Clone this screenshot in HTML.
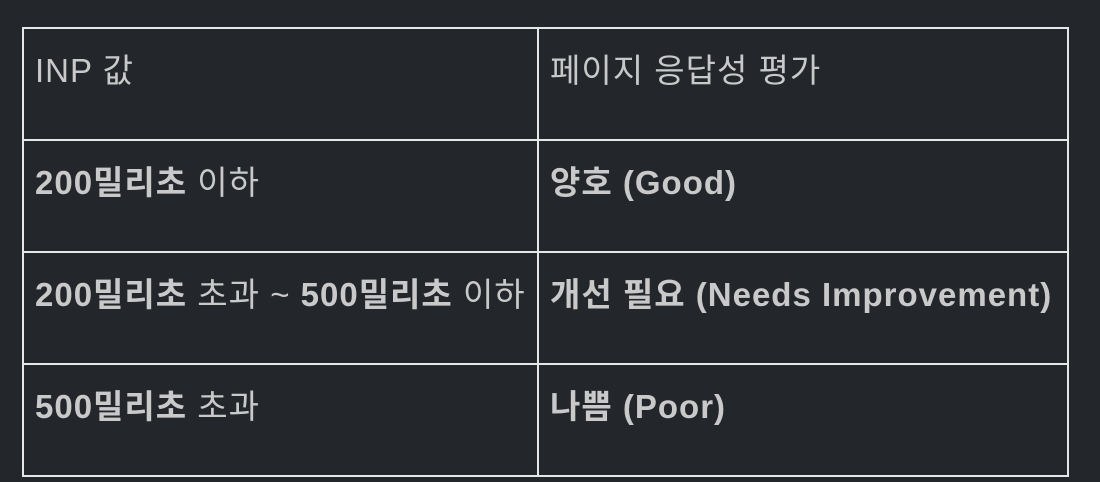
<!DOCTYPE html>
<html><head><meta charset="utf-8"><style>
html,body{margin:0;padding:0;background:#23262b;width:1100px;height:482px;overflow:hidden}
table{position:absolute;left:22px;top:27px;border-collapse:collapse;font-family:"Liberation Sans","Noto Sans CJK KR",sans-serif;font-size:33px;color:#c9c9c9;table-layout:fixed;width:1045px}
td{border:2px solid #e6e6e6;height:112px;padding:0 0 0 11px;vertical-align:top;line-height:34px;box-sizing:border-box;letter-spacing:1px;white-space:nowrap;overflow:hidden}
td div{padding-top:25px}
td.a{width:515px}td.b{width:530px}
b{font-weight:bold}
</style></head><body>
<table>
<tr><td class="a"><div>INP 값</div></td><td class="b"><div>페이지 응답성 평가</div></td></tr>
<tr><td class="a"><div><b>200밀리초</b> 이하</div></td><td class="b"><div><b>양호 (Good)</b></div></td></tr>
<tr><td class="a"><div><b>200밀리초</b> 초과 ~ <b>500밀리초</b> 이하</div></td><td class="b"><div><b>개선 필요 (Needs Improvement)</b></div></td></tr>
<tr><td class="a"><div><b>500밀리초</b> 초과</div></td><td class="b"><div><b>나쁨 (Poor)</b></div></td></tr>
</table>
</body></html>
